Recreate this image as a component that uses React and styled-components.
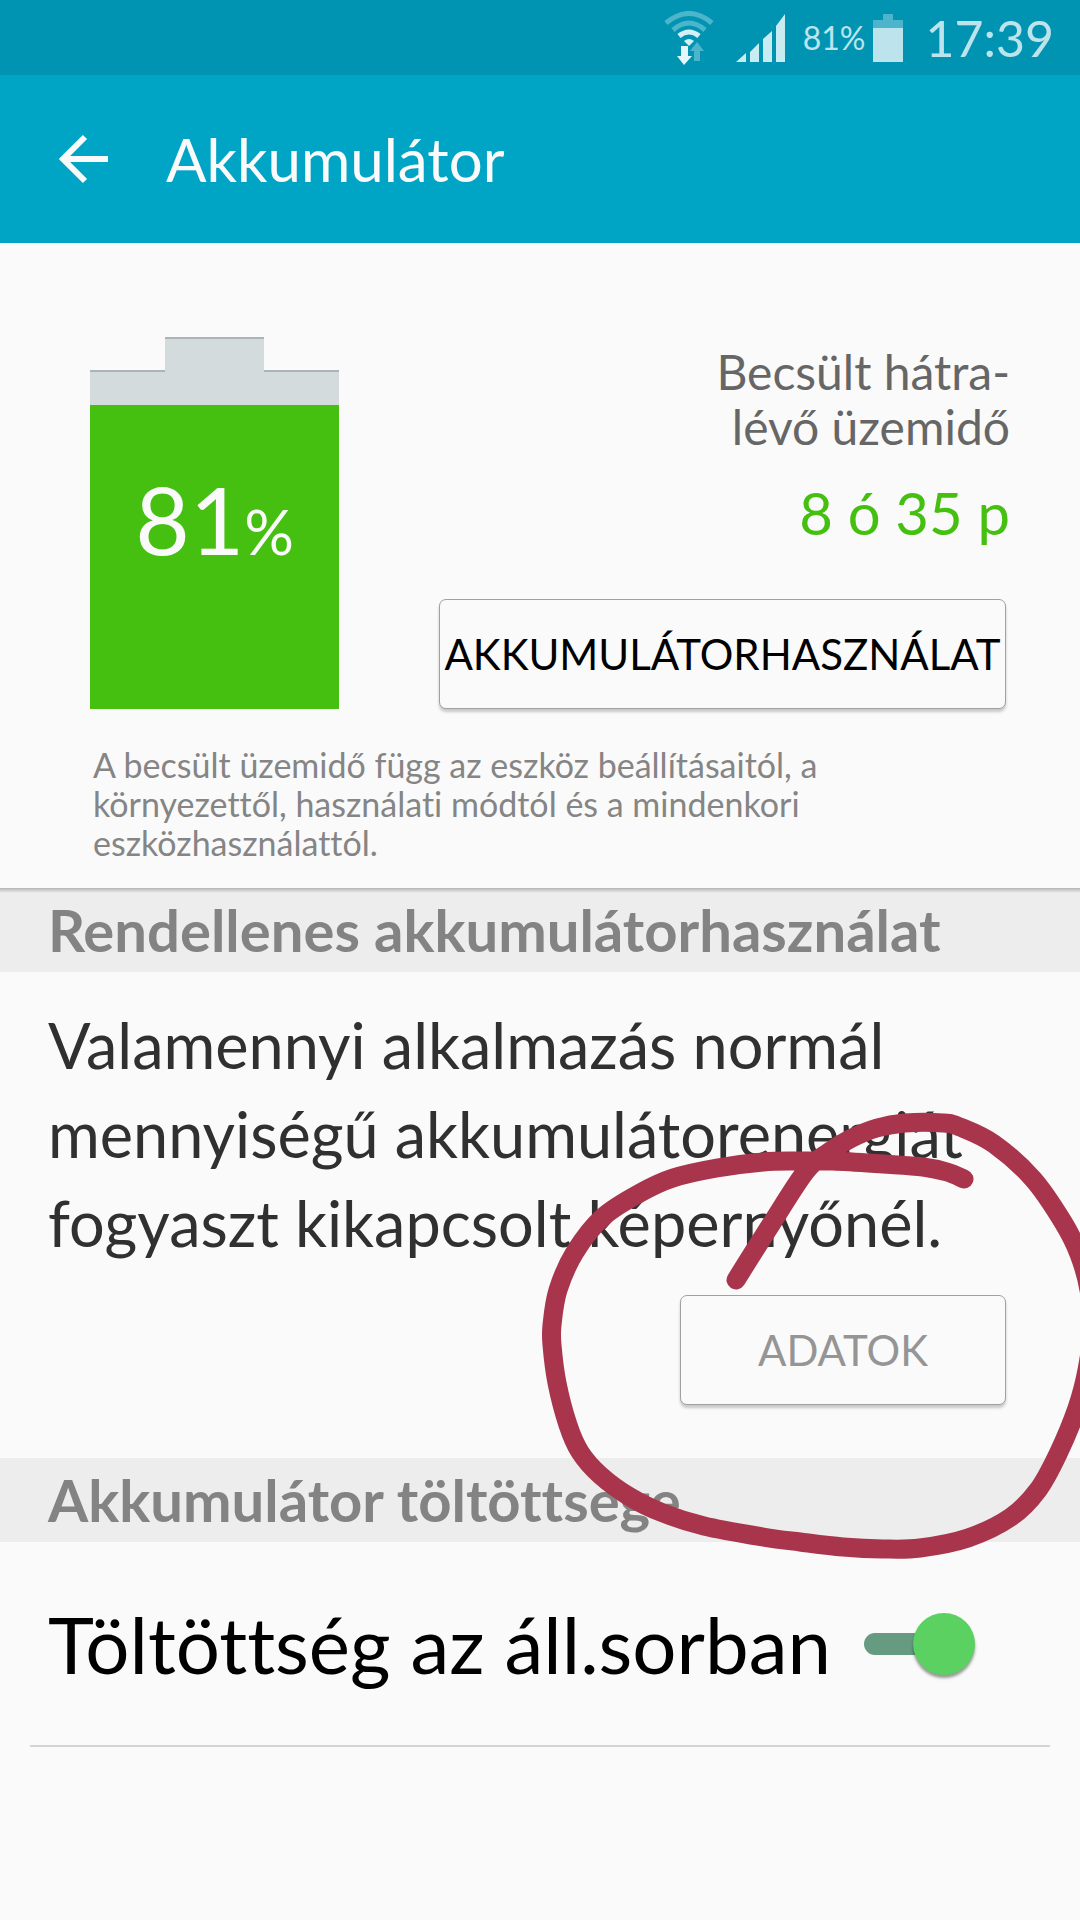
import {useState} from 'react';
import styled, {createGlobalStyle} from 'styled-components';

const GlobalStyle = createGlobalStyle`
  * {
    box-sizing: border-box;
  }
  body {
    margin: 0;
    background: #fafafa;
    font-family: Lato, "Open Sans", sans-serif;
    font-variant-ligatures: none;
  }
  h1, h2, p {
    margin: 0;
    font-weight: 400;
  }
`;

const Screen = styled.div`
  position: relative;
  min-height: 100vh;
  overflow: hidden;
  background: #fafafa;
`;

const StatusBar = styled.div`
  display: flex;
  align-items: center;
  justify-content: flex-end;
  height: 75px;
  padding: 0 26px 0 24px;
  background: #0094b2;
  color: #bde4ec;
`;

const StatusIcon = styled.svg`
  flex: none;
  margin-right: ${({$gap}) => $gap}px;
`;

const StatusPercent = styled.span`
  margin-right: 8px;
  font-size: 32px;
  line-height: 40px;
`;

const Clock = styled.time`
  font-size: 50px;
  line-height: 64px;
`;

const AppBar = styled.header`
  display: flex;
  align-items: center;
  gap: 58px;
  height: 168px;
  padding: 0 58px;
  background: #00a5c6;
  color: #fafafa;
`;

const BackButton = styled.button`
  display: flex;
  padding: 0;
  border: none;
  background: none;
  color: inherit;
  cursor: pointer;
`;

const Title = styled.h1`
  font-size: 60px;
  line-height: 80px;
`;

const Summary = styled.section`
  padding: 94px 70px 26px 90px;
`;

const SummaryTop = styled.div`
  display: flex;
  justify-content: space-between;
`;

const Battery = styled.div`
  display: flex;
  flex-direction: column;
  align-items: center;
  width: 249px;
`;

const BatteryCap = styled.div`
  width: 99px;
  height: 33px;
  background: #d3dbdc;
  border-top: 2px solid #adb4b6;
`;

const BatteryShoulder = styled.div`
  display: flex;
  justify-content: space-between;
  width: 100%;
  height: 35px;
  background: #d3dbdc;
  &::before,
  &::after {
    content: '';
    width: 75px;
    height: 2px;
    background: #adb4b6;
  }
`;

const BatteryLevel = styled.div`
  width: 100%;
  height: 304px;
  padding-top: 54px;
  background: #45c010;
  color: #fafafa;
  font-size: 94px;
  line-height: 120px;
  text-align: center;
`;

const Percent = styled.span`
  font-size: 62px;
`;

const Estimate = styled.div`
  display: flex;
  flex-direction: column;
  align-items: flex-end;
  padding-top: 7px;
  text-align: right;
`;

const EstimateLabel = styled.p`
  color: #666;
  font-size: 48px;
  line-height: 55px;
`;

const EstimateTime = styled.p`
  margin: 22px 0 49px;
  color: #45c010;
  font-size: 58px;
  line-height: 74px;
`;

const Button = styled.button`
  height: 110px;
  padding: 0;
  width: ${({$width}) => $width}px;
  margin-right: 4px;
  border: 1px solid #a0a0a0;
  border-radius: 7px;
  background: #fafafa;
  box-shadow: 0 3px 3px rgba(0, 0, 0, 0.2);
  color: #000;
  font-family: inherit;
  font-size: 42px;
  line-height: 56px;
  cursor: pointer;
  &:disabled {
    color: #959595;
    cursor: default;
  }
`;

const Disclaimer = styled.p`
  max-width: 760px;
  margin-top: 36px;
  padding-left: 3px;
  color: #858585;
  font-size: 34px;
  line-height: 39px;
`;

const SectionTitle = styled.h2`
  height: 84px;
  padding: 0 48px;
  background: ${({$shaded}) => ($shaded ? 'linear-gradient(#b4b4b4, #ededed 5px)' : '#ededed')};
  color: #838383;
  font-size: 58px;
  font-weight: 700;
  line-height: 84px;
`;

const Abnormal = styled.section`
  display: flex;
  flex-direction: column;
  align-items: flex-end;
  padding: 28px 70px 53px 48px;
`;

const Message = styled.p`
  width: 100%;
  margin-bottom: 28px;
  color: #303030;
  font-size: 63px;
  line-height: 89px;
`;

const SettingRow = styled.label`
  display: flex;
  align-items: center;
  justify-content: space-between;
  height: 205px;
  margin: 0 30px;
  padding: 0 74px 0 18px;
  border-bottom: 2px solid #d4d4d4;
  color: #000;
  font-size: 78px;
  cursor: pointer;
`;

const Switch = styled.input`
  appearance: none;
  display: flex;
  align-items: center;
  flex: none;
  width: 112px;
  height: 64px;
  margin: 0;
  cursor: pointer;
  &::before {
    content: '';
    width: 80px;
    height: 22px;
    border-radius: 11px;
    background: #a0a0a0;
  }
  &::after {
    content: '';
    width: 62px;
    height: 62px;
    margin-left: -80px;
    border-radius: 50%;
    background: #f1f1f1;
    box-shadow: 0 3px 3px rgba(0, 0, 0, 0.4);
  }
  &:checked::before {
    background: #669b82;
  }
  &:checked::after {
    margin-left: -31px;
    background: #5bd162;
  }
`;

const ScribbleSvg = styled.svg`
  position: absolute;
  top: 1100px;
  right: 0;
  pointer-events: none;
`;

const penPoints = [
  [736, 1280], [770, 1226], [806, 1171], [829, 1152], [850, 1139], [877, 1128], [905, 1123], [943, 1123],
  [960, 1127], [994, 1144], [1033, 1179], [1063, 1222], [1079, 1254], [1089, 1290], [1092, 1330],
  [1087, 1370], [1077, 1408], [1058, 1454], [1038, 1490], [1011, 1517], [968, 1538], [920, 1548],
  [883, 1549], [843, 1547], [800, 1542], [763, 1537], [704, 1526], [663, 1513], [630, 1497], [600, 1475],
  [580, 1452], [568, 1425], [557, 1383], [552, 1345], [552, 1325], [558, 1290], [575, 1252], [603, 1217],
  [640, 1193], [673, 1178], [717, 1168], [763, 1162], [797, 1161], [833, 1161], [883, 1164], [923, 1167],
  [947, 1172], [964, 1179],
];

// Catmull-Rom spline through the points
const toPath = points => {
  let d = `M${points[0]}`;
  for (let i = 0; i < points.length - 1; i++) {
    const p0 = points[i - 1] || points[i];
    const p1 = points[i];
    const p2 = points[i + 1];
    const p3 = points[i + 2] || p2;
    const c1 = [p1[0] + (p2[0] - p0[0]) / 6, p1[1] + (p2[1] - p0[1]) / 6];
    const c2 = [p2[0] - (p3[0] - p1[0]) / 6, p2[1] - (p3[1] - p1[1]) / 6];
    d += `C${c1} ${c2} ${p2}`;
  }
  return d;
};

const Scribble = () => (
  <ScribbleSvg width="540" height="470" viewBox="540 1100 540 470" fill="none" aria-hidden="true">
    <path d={toPath(penPoints)} stroke="#a8354c" strokeWidth="19" strokeLinecap="round" strokeLinejoin="round" />
  </ScribbleSvg>
);

const App = () => {
  const [showPercent, setShowPercent] = useState(true);
  const handleToggle = event => setShowPercent(event.target.checked);

  return (
    <Screen>
      <GlobalStyle />
      <StatusBar>
        <StatusIcon $gap={22} width="50" height="54" viewBox="0 0 50 54" fill="none">
          <path d="M2 12Q25-7 48 12" stroke="#4db5cb" strokeWidth="5" />
          <path d="M9 19Q25 5 41 19" stroke="#4db5cb" strokeWidth="5" />
          <path d="M15 25Q25 17 35 25" stroke="#d3f0f6" strokeWidth="5" />
          <path d="M20 30Q25 26 30 30L25 35z" fill="#d3f0f6" />
          <path d="M17 35h7v10h4l-8 9-7-9h4z" fill="#e3f6fa" />
          <path d="M30 50V40h-4l7-9 7 9h-4v10z" fill="#4db5cb" />
        </StatusIcon>
        <StatusIcon $gap={18} width="49" height="48" viewBox="0 0 49 48" fill="#c9ebf2">
          <path d="M0 48l10-9v9zM14 38l9-9v19h-9zM27 25l9-8v31h-9zM40 12l9-12v48h-9z" />
        </StatusIcon>
        <StatusPercent>81%</StatusPercent>
        <StatusIcon $gap={22} width="30" height="48" viewBox="0 0 30 48">
          <path d="M10 0h10v6h10v8H0V6h10z" fill="#4db5cb" />
          <path d="M0 14h30v34H0z" fill="#bde4ec" />
        </StatusIcon>
        <Clock>17:39</Clock>
      </StatusBar>

      <AppBar>
        <BackButton aria-label="Vissza">
          <svg width="50" height="52" viewBox="0 0 50 52" fill="none" stroke="currentColor" strokeWidth="6">
            <path d="M27 4L5 26l22 22M5 26h45" />
          </svg>
        </BackButton>
        <Title>Akkumulátor</Title>
      </AppBar>

      <Summary>
        <SummaryTop>
          <Battery>
            <BatteryCap />
            <BatteryShoulder />
            <BatteryLevel>
              81<Percent>%</Percent>
            </BatteryLevel>
          </Battery>
          <Estimate>
            <EstimateLabel>
              Becsült hátra-
              <br />
              lévő üzemidő
            </EstimateLabel>
            <EstimateTime>8 ó 35 p</EstimateTime>
            <Button $width={567}>AKKUMULÁTORHASZNÁLAT</Button>
          </Estimate>
        </SummaryTop>
        <Disclaimer>
          A becsült üzemidő függ az eszköz beállításaitól, a környezettől, használati módtól és a mindenkori
          eszközhasználattól.
        </Disclaimer>
      </Summary>

      <SectionTitle $shaded>Rendellenes akkumulátorhasználat</SectionTitle>
      <Abnormal>
        <Message>Valamennyi alkalmazás normál mennyiségű akkumulátorenergiát fogyaszt kikapcsolt képernyőnél.</Message>
        <Button $width={326} disabled>
          ADATOK
        </Button>
      </Abnormal>

      <SectionTitle>Akkumulátor töltöttsége</SectionTitle>
      <SettingRow>
        Töltöttség az áll.sorban
        <Switch type="checkbox" checked={showPercent} onChange={handleToggle} />
      </SettingRow>

      <Scribble />
    </Screen>
  );
};

export default App;
